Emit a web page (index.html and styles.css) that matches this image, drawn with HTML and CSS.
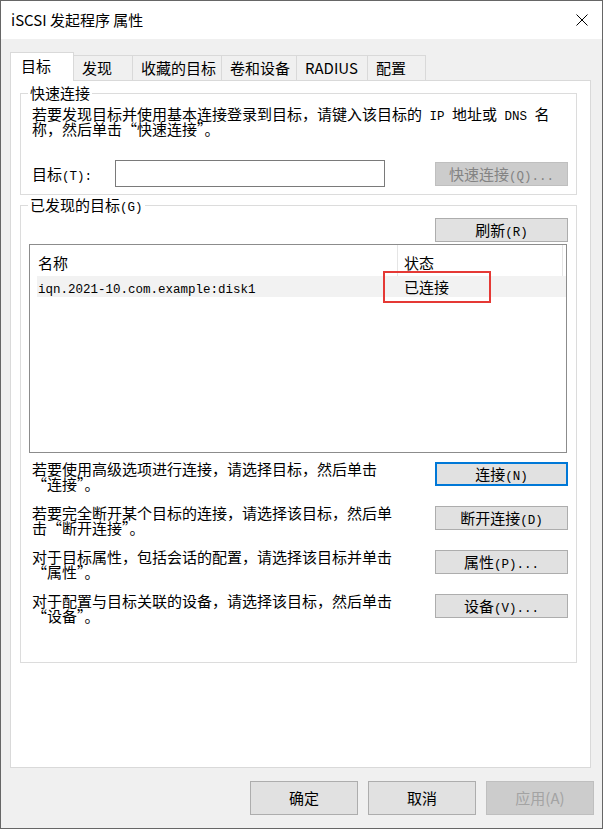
FILE: index.html
```html
<!DOCTYPE html>
<html lang="zh-CN">
<head>
    <meta charset="utf-8">
    <title>iSCSI 发起程序 属性</title>
    <link rel="stylesheet" href="styles.css">
</head>
<body>
    <div class="window">
        <div class="titlebar">
            <span class="title">iSCSI 发起程序 属性</span>
            <svg class="close" width="12" height="12" viewBox="0 0 12 12">
                <path d="M0.5 0.5L11.5 11.5M11.5 0.5L0.5 11.5" stroke="#000" stroke-width="1" fill="none"/>
            </svg>
        </div>

        <div class="tabs">
            <div class="tab active t1">目标</div>
            <div class="tab t2">发现</div>
            <div class="tab t3">收藏的目标</div>
            <div class="tab t4">卷和设备</div>
            <div class="tab t5">RADIUS</div>
            <div class="tab t6">配置</div>
        </div>

        <div class="panel">
            <fieldset class="group quick">
                <legend>快速连接</legend>
                <p class="note">若要发现目标并使用基本连接登录到目标，请键入该目标的<span class="m"> IP </span>地址或<span class="m"> DNS </span>名<br>称，然后单击“快速连接”。</p>
                <div class="target-row">
                    <label>目标<span class="m">(T):</span></label>
                    <input class="target-input" type="text">
                    <button class="btn disabled">快速连接<span class="m">(Q)...</span></button>
                </div>
            </fieldset>

            <fieldset class="group found">
                <legend>已发现的目标<span class="m">(G)</span></legend>
                <div class="refresh-row">
                    <button class="btn">刷新<span class="m">(R)</span></button>
                </div>
                <div class="list">
                    <div class="list-head">
                        <div class="col name">名称</div>
                        <div class="col state">状态</div>
                    </div>
                    <div class="list-row">
                        <div class="col name"><span class="m">iqn.2021-10.com.example:disk1</span></div>
                        <div class="col state">已连接</div>
                    </div>
                    <div class="highlight"></div>
                </div>

                <div class="actions">
                    <div class="action">
                        <p>若要使用高级选项进行连接，请选择目标，然后单击<br>“连接”。</p>
                        <button class="btn focus">连接<span class="m">(N)</span></button>
                    </div>
                    <div class="action">
                        <p>若要完全断开某个目标的连接，请选择该目标，然后单<br>击“断开连接”。</p>
                        <button class="btn">断开连接<span class="m">(D)</span></button>
                    </div>
                    <div class="action">
                        <p>对于目标属性，包括会话的配置，请选择该目标并单击<br>“属性”。</p>
                        <button class="btn">属性<span class="m">(P)...</span></button>
                    </div>
                    <div class="action">
                        <p>对于配置与目标关联的设备，请选择该目标，然后单击<br>“设备”。</p>
                        <button class="btn">设备<span class="m">(V)...</span></button>
                    </div>
                </div>
            </fieldset>
        </div>

        <div class="footer">
            <button class="btn">确定</button>
            <button class="btn">取消</button>
            <button class="btn disabled apply">应用(A)</button>
        </div>
    </div>
</body>
</html>
```

FILE: styles.css
```css
* {
    box-sizing: border-box;
}
html, body {
    margin: 0;
    padding: 0;
}
body {
    font-family: "Noto Sans CJK SC", "Noto Sans", sans-serif;
    font-size: 15px;
    color: #000;
    background: #fff;
}
/* half-width ascii, like the dialog's bitmap font */
.m {
    font-family: "Liberation Mono", monospace;
    font-size: 12.5px;
    line-height: 0;
}
.window {
    width: 603px;
    height: 829px;
    border: 1px solid #666;
    background: #f0f0f0;
    display: flex;
    flex-direction: column;
}
.titlebar {
    height: 38px;
    flex: none;
    background: #fff;
    display: flex;
    align-items: center;
    justify-content: space-between;
    padding: 0 14px 0 10px;
}
.title {
    line-height: 20px;
}

/* tab strip */
.tabs {
    display: flex;
    align-items: flex-end;
    padding: 13px 0 0 9px;
    margin-bottom: -1px;
    flex: none;
}
.tab {
    height: 26px;
    line-height: 24px;
    padding-left: 8px;
    border: 1px solid #d9d9d9;
    border-bottom: none;
    margin-left: -1px;
    background: #f0f0f0;
    white-space: nowrap;
}
.tab.active {
    height: 29px;
    line-height: 26px;
    padding-left: 10px;
    margin-left: 0;
    background: #fff;
    position: relative;
    z-index: 1;
}
.t1 { width: 64px; }
.t2 { width: 60px; }
.t3 { width: 90px; }
.t4 { width: 76px; }
.t5 { width: 72px; }
.t6 { width: 59px; }

.panel {
    flex: none;
    margin: 0 11px 0 9px;
    height: 688px;
    background: #fff;
    border: 1px solid #d9d9d9;
    padding: 4px 13px 0 9px;
}

/* group boxes */
.group {
    margin: 0;
    min-width: 0;
    border: 1px solid #dcdcdc;
    padding: 0 8px 7px 11px;
}
.group legend {
    padding: 0 2px;
    margin-left: -4px;
    line-height: 16px;
}
.note {
    margin: 5px 0 0;
    line-height: 15px;
    white-space: nowrap;
}
.target-row {
    display: flex;
    align-items: center;
    height: 27px;
    margin-top: 24px;
}
.target-row label {
    width: 83px;
}
.target-input {
    width: 270px;
    height: 27px;
    border: 1px solid #7a7a7a;
    padding: 0;
    margin: 0;
    background: #fff;
}

/* buttons */
.btn {
    font: inherit;
    color: #000;
    width: 133px;
    height: 24px;
    padding: 0;
    margin: 0 0 0 auto;
    line-height: 20px;
    background: #e1e1e1;
    border: 1px solid #adadad;
    border-radius: 0;
}
.btn.focus {
    border: 2px solid #0078d7;
}
.btn.disabled {
    background: #cccccc;
    border-color: #bfbfbf;
    color: #838383;
}

.found {
    margin-top: 2px;
    padding-bottom: 39px;
}
.refresh-row {
    display: flex;
    margin-top: 5px;
}

/* target list */
.list {
    position: relative;
    height: 209px;
    margin: 2px 1px 0 -3px;
    border: 1px solid #8c8c8c;
    background: #fff;
    padding-left: 7px;
}
.list-head,
.list-row {
    display: flex;
}
.col.name {
    width: 361px;
    padding-left: 1px;
}
.col.state {
    width: 165px;
    padding-left: 6px;
}
.list-head .col {
    height: 31px;
    padding-top: 10px;
    line-height: 15px;
    border-right: 1px solid #e5e5e5;
}
.list-row {
    height: 21px;
    line-height: 21px;
    background: #f2f2f2;
}
.highlight {
    position: absolute;
    left: 353px;
    top: 26px;
    width: 108px;
    height: 32px;
    border: 2px solid #e53935;
}

.actions {
    margin-top: 8px;
    display: flex;
    flex-direction: column;
    gap: 14px;
}
.action {
    display: flex;
    align-items: flex-start;
}
.action p {
    margin: 0;
    line-height: 15px;
    white-space: nowrap;
}
.action .btn {
    margin-top: 1px;
}

/* dialog buttons */
.footer {
    display: flex;
    justify-content: flex-end;
    gap: 10px;
    padding-right: 8px;
    margin-top: 13px;
}
.footer .btn {
    width: 108px;
    height: 34px;
    margin: 0;
}
.footer .apply {
    color: #a3a3a3;
}
```
